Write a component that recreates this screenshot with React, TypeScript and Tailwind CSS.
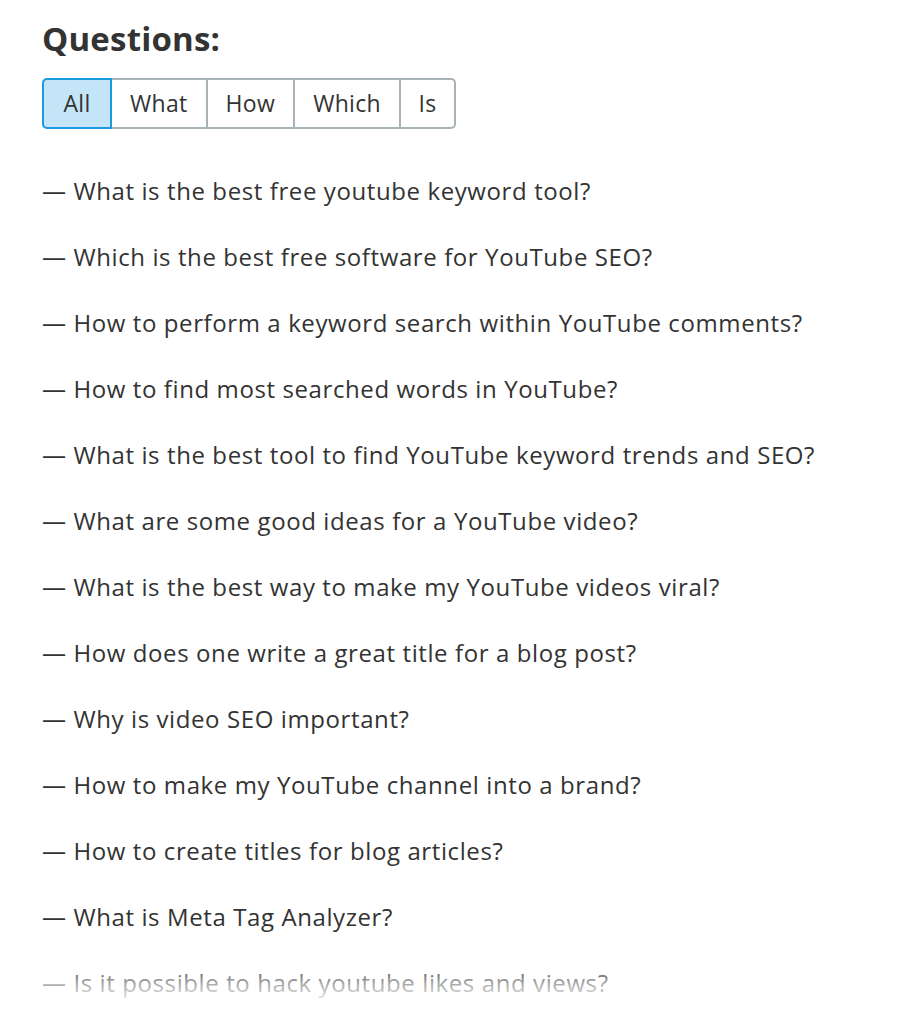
import React from "react";

const questions = [
  "What is the best free youtube keyword tool?",
  "Which is the best free software for YouTube SEO?",
  "How to perform a keyword search within YouTube comments?",
  "How to find most searched words in YouTube?",
  "What is the best tool to find YouTube keyword trends and SEO?",
  "What are some good ideas for a YouTube video?",
  "What is the best way to make my YouTube videos viral?",
  "How does one write a great title for a blog post?",
  "Why is video SEO important?",
  "How to make my YouTube channel into a brand?",
  "How to create titles for blog articles?",
  "What is Meta Tag Analyzer?",
  "Is it possible to hack youtube likes and views?",
];

const tabs = ["All", "What", "How", "Which", "Is"];

export default function App() {
  return (
    <div
      className="relative h-[1032px] w-[906px] overflow-hidden bg-white pl-[42px] pt-[17px] text-[#333333]"
      style={{ fontFamily: '"Open Sans", "Noto Sans", sans-serif' }}
    >
      <h1 className="text-[33px] font-bold leading-[44px] tracking-[0.2px]">Questions:</h1>
      <div className="mt-[17px] flex h-[51px] w-fit">
        {tabs.map((t, i) => (
          <div
            key={t}
            className={
              i === 0
                ? "flex items-center justify-center rounded-l-[5px] border-2 border-[#1b9ae0] bg-[#c4e5f7] px-[19.5px] text-[23px] tracking-[0.3px] text-[#333333]"
                : i === tabs.length - 1
                ? "flex items-center justify-center rounded-r-[5px] border-y-2 border-r-2 border-[#a7b3b7] px-[17.5px] text-[23px] tracking-[0.3px] text-[#333333]"
                : "flex items-center justify-center border-y-2 border-r-2 border-[#a7b3b7] px-[18px] text-[23px] tracking-[0.3px] text-[#333333]"
            }
          >
            {t}
          </div>
        ))}
      </div>
      <ul className="mt-[29px] flex flex-col">
        {questions.map((q) => (
          <li key={q} className="h-[66px] text-[24px] leading-[66px] tracking-[0.6px]">
            — {q}
          </li>
        ))}
      </ul>
      <div className="pointer-events-none absolute left-0 top-[962px] h-[45px] w-full bg-gradient-to-b from-white/0 via-white/60 to-white" />
    </div>
  );
}
